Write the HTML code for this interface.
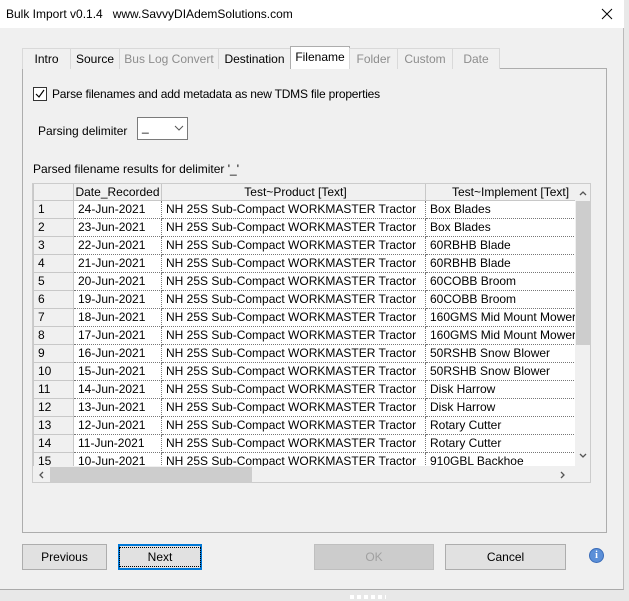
<!DOCTYPE html>
<html><head><style>
*{box-sizing:border-box;margin:0;padding:0}
body{width:629px;height:601px;background:#e8e8e8;font-family:"Liberation Sans",sans-serif;font-size:12px;color:#000;position:relative;overflow:hidden}
.abs{position:absolute}
.win{left:0;top:0;width:624px;height:590px;background:#f0f0f0;border-right:1px solid #bbb;border-bottom:1px solid #aaa}
.title{left:0;top:0;width:624px;height:28px;background:#fff}
.tab{position:absolute;top:48px;height:21px;border:1px solid #d9d9d9;border-bottom:none;background:#f0f0f0;text-align:center;line-height:20px;font-size:12px;white-space:nowrap;overflow:hidden}
.dis{color:#8d8d8d}
.btn{position:absolute;top:544px;height:26px;border:1px solid #adadad;background:#e1e1e1;text-align:center;line-height:24px}
table{border-collapse:collapse;font-size:12px}
td{height:18px;border-right:1px dotted #777;border-bottom:1px dotted #777;padding-left:4px;white-space:nowrap;overflow:hidden;line-height:16px}
td.n{background:#f0f0f0;border:1px solid #c8c8c8;border-top:none}
tr.h td{height:16px;line-height:14px}
</style></head><body>
<div class="abs win"></div>
<div class="abs title"></div>
<div class="abs" style="left:6px;top:7px;font-size:12px">Bulk Import v0.1.4&nbsp;&nbsp; www.SavvyDIAdemSolutions.com</div>
<svg class="abs" style="left:601px;top:8px" width="12" height="12"><path d="M1 1L11 11M11 1L1 11" stroke="#000" stroke-width="1"/></svg>
<div class="abs" style="left:22px;top:68px;width:585px;height:465px;border:1px solid #adadad;background:#f0f0f0"></div>
<div class="tab" style="left:22px;width:49px">Intro</div>
<div class="tab" style="left:70px;width:50px">Source</div>
<div class="tab dis" style="left:119px;width:100px">Bus Log Convert</div>
<div class="tab" style="left:218px;width:73px">Destination</div>
<div class="tab" style="left:290px;top:46px;height:23px;width:60px;background:#fff;line-height:20px;border-color:#adadad">Filename</div>
<div class="tab dis" style="left:349px;width:49px">Folder</div>
<div class="tab dis" style="left:397px;width:56px">Custom</div>
<div class="tab dis" style="left:452px;width:48px">Date</div>
<div class="abs" style="left:33px;top:87px;width:14px;height:14px;border:1px solid #333;background:#fff"></div>
<svg class="abs" style="left:34px;top:88px" width="12" height="12"><path d="M2 6L5 9L10 2" stroke="#000" fill="none" stroke-width="1.2"/></svg>
<div class="abs" style="left:52px;top:87px;letter-spacing:-0.2px">Parse filenames and add metadata as new TDMS file properties</div>
<div class="abs" style="left:38px;top:124px">Parsing delimiter</div>
<div class="abs" style="left:137px;top:117px;width:51px;height:23px;border:1px solid #7a7a7a;background:#fff;padding-left:4px;line-height:18px">_</div>
<svg class="abs" style="left:174px;top:125px" width="10" height="6"><path d="M1 1L5 5L9 1" stroke="#555" fill="none"/></svg>
<div class="abs" style="left:33px;top:162px">Parsed filename results for delimiter '_'</div>
<div class="abs" style="left:32px;top:183px;width:559px;height:300px;border:1px solid #ccc;background:#f0f0f0;overflow:hidden">
<div class="abs" style="left:0;top:0;width:542px;height:282px;overflow:hidden;background:#fff">
<table style="width:570px;table-layout:fixed">
<colgroup><col style="width:40px"><col style="width:88px"><col style="width:264px"><col style="width:178px"></colgroup>
<tr class="h" style="background:#f0f0f0"><td class="n" style="border-top:none"></td><td style="border:1px solid #c8c8c8;border-top:none;text-align:center;padding:0">Date_Recorded</td><td style="border:1px solid #c8c8c8;border-top:none;text-align:center">Test~Product [Text]</td><td style="border:1px solid #c8c8c8;border-top:none;text-align:left;padding-left:26px">Test~Implement [Text]</td></tr>
<tr><td class="n">1</td><td>24-Jun-2021</td><td>NH 25S Sub-Compact WORKMASTER Tractor</td><td>Box Blades</td></tr>
<tr><td class="n">2</td><td>23-Jun-2021</td><td>NH 25S Sub-Compact WORKMASTER Tractor</td><td>Box Blades</td></tr>
<tr><td class="n">3</td><td>22-Jun-2021</td><td>NH 25S Sub-Compact WORKMASTER Tractor</td><td>60RBHB Blade</td></tr>
<tr><td class="n">4</td><td>21-Jun-2021</td><td>NH 25S Sub-Compact WORKMASTER Tractor</td><td>60RBHB Blade</td></tr>
<tr><td class="n">5</td><td>20-Jun-2021</td><td>NH 25S Sub-Compact WORKMASTER Tractor</td><td>60COBB Broom</td></tr>
<tr><td class="n">6</td><td>19-Jun-2021</td><td>NH 25S Sub-Compact WORKMASTER Tractor</td><td>60COBB Broom</td></tr>
<tr><td class="n">7</td><td>18-Jun-2021</td><td>NH 25S Sub-Compact WORKMASTER Tractor</td><td>160GMS Mid Mount Mower</td></tr>
<tr><td class="n">8</td><td>17-Jun-2021</td><td>NH 25S Sub-Compact WORKMASTER Tractor</td><td>160GMS Mid Mount Mower</td></tr>
<tr><td class="n">9</td><td>16-Jun-2021</td><td>NH 25S Sub-Compact WORKMASTER Tractor</td><td>50RSHB Snow Blower</td></tr>
<tr><td class="n">10</td><td>15-Jun-2021</td><td>NH 25S Sub-Compact WORKMASTER Tractor</td><td>50RSHB Snow Blower</td></tr>
<tr><td class="n">11</td><td>14-Jun-2021</td><td>NH 25S Sub-Compact WORKMASTER Tractor</td><td>Disk Harrow</td></tr>
<tr><td class="n">12</td><td>13-Jun-2021</td><td>NH 25S Sub-Compact WORKMASTER Tractor</td><td>Disk Harrow</td></tr>
<tr><td class="n">13</td><td>12-Jun-2021</td><td>NH 25S Sub-Compact WORKMASTER Tractor</td><td>Rotary Cutter</td></tr>
<tr><td class="n">14</td><td>11-Jun-2021</td><td>NH 25S Sub-Compact WORKMASTER Tractor</td><td>Rotary Cutter</td></tr>
<tr><td class="n">15</td><td>10-Jun-2021</td><td>NH 25S Sub-Compact WORKMASTER Tractor</td><td>910GBL Backhoe</td></tr>
</table></div>
<div class="abs" style="left:543px;top:17px;width:14px;height:144px;background:#cdcdcd"></div>
<svg class="abs" style="left:545px;top:5px" width="10" height="8"><path d="M2 6L5 3L8 6" stroke="#555" fill="none" stroke-width="1.3"/></svg>
<svg class="abs" style="left:545px;top:268px" width="10" height="8"><path d="M2 2L5 5L8 2" stroke="#555" fill="none" stroke-width="1.3"/></svg>
<div class="abs" style="left:17px;top:283px;width:202px;height:16px;background:#cdcdcd"></div>
<svg class="abs" style="left:4px;top:286px" width="8" height="10"><path d="M6 2L3 5L6 8" stroke="#555" fill="none" stroke-width="1.3"/></svg>
<svg class="abs" style="left:526px;top:286px" width="8" height="10"><path d="M2 2L5 5L2 8" stroke="#555" fill="none" stroke-width="1.3"/></svg>
</div>
<div class="btn" style="left:22px;width:85px">Previous</div>
<div class="btn" style="left:118px;width:84px;border:2px solid #0078d7;line-height:22px"><span style="outline:1px dotted #000;outline-offset:2px;padding:0 26px">Next</span></div>
<div class="btn" style="left:314px;width:120px;color:#a0a0a0;background:#ccc;border-color:#bfbfbf">OK</div>
<div class="btn" style="left:445px;width:121px">Cancel</div>
<div class="abs" style="left:589px;top:548px;width:15px;height:15px;border-radius:50%;background:#5b8fd8;border:1px solid #3a6cb8;color:#fff;font-size:10px;font-weight:bold;text-align:center;line-height:13px;font-family:'Liberation Serif',serif">i</div>
<div class="abs" style="left:350px;top:595px;width:36px;height:4px;background:repeating-linear-gradient(90deg,#fff 0 4px,transparent 4px 7px)"></div>
</body></html>
